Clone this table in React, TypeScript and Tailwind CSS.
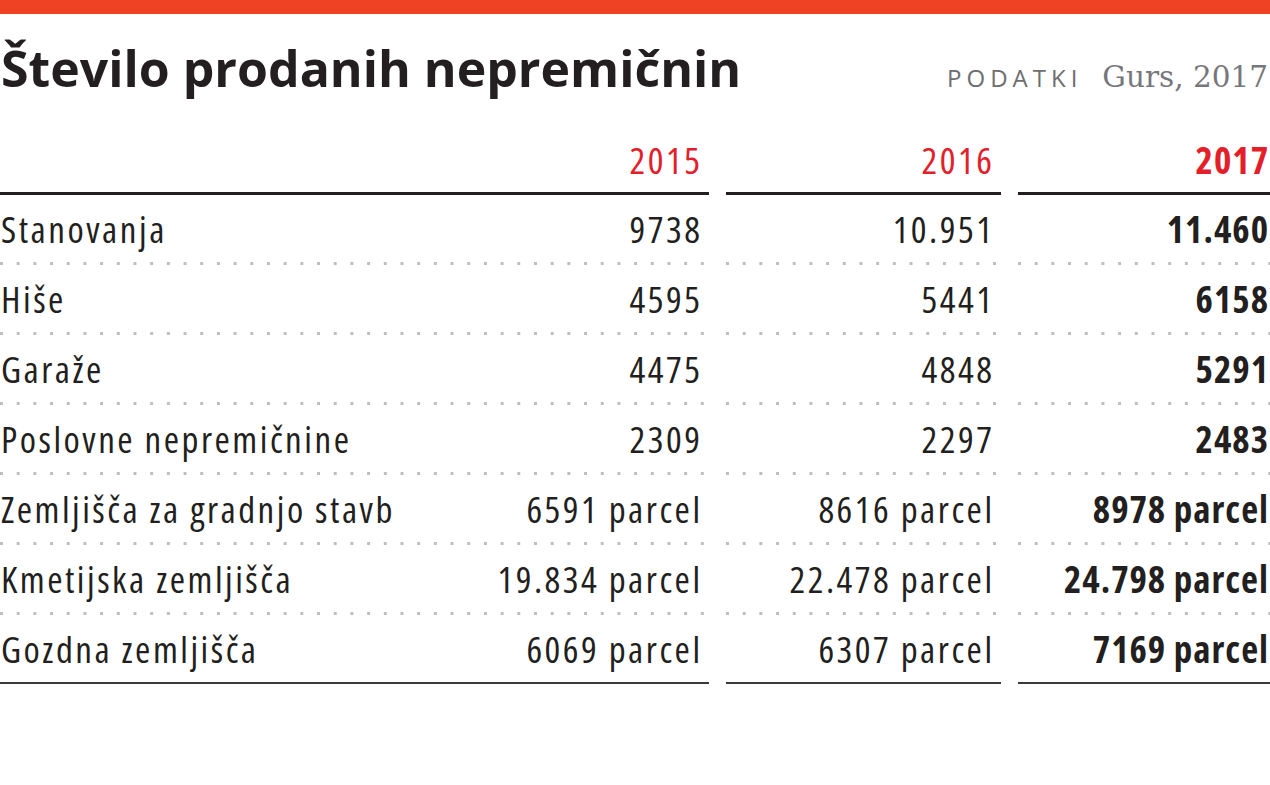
import React from "react";

const rows: [string, string, string, string][] = [
  ["Stanovanja", "9738", "10.951", "11.460"],
  ["Hiše", "4595", "5441", "6158"],
  ["Garaže", "4475", "4848", "5291"],
  ["Poslovne nepremičnine", "2309", "2297", "2483"],
  ["Zemljišča za gradnjo stavb", "6591 parcel", "8616 parcel", "8978 parcel"],
  ["Kmetijska zemljišča", "19.834 parcel", "22.478 parcel", "24.798 parcel"],
  ["Gozdna zemljišča", "6069 parcel", "6307 parcel", "7169 parcel"],
];

const Dots = () => (
  <div className="h-[3px] w-full bg-[linear-gradient(to_right,#bcbec0_3px,transparent_3px)] bg-[length:16.7px_3px] bg-repeat-x" />
);

const Rule = () => <div className="h-[2px] bg-[#3a3a3a]" />;

export default function App() {
  return (
    <div className="w-[1270px] h-[785px] bg-white text-[#231f20] font-['Open_Sans',sans-serif] overflow-hidden">
      <div className="h-[14px] bg-[#ef4123]" />
      <div className="flex items-baseline justify-between pr-[2px] pl-[1px] h-[92px] pt-[24px]">
        <h1 className="text-[50px] font-bold leading-[60px]">
          Število prodanih nepremičnin
        </h1>
        <div className="flex items-baseline gap-[20px]">
          <span className="text-[24px] tracking-[5px] text-[#6d6e70]">PODATKI</span>
          <span className="text-[29.5px] text-[#76777a] font-['DejaVu_Serif',serif]">Gurs, 2017</span>
        </div>
      </div>
      <div className="text-[37px] font-medium font-stretch-condensed tracking-[2.5px]">
        <div className="flex gap-[17px] h-[89px] items-end">
          <div className="w-[709px] pr-[6.5px] border-b-[3px] border-[#231f20] text-right text-[#e3202a] leading-[44px] pb-[10px]">
            2015
          </div>
          <div className="w-[275px] pr-[6.5px] border-b-[3px] border-[#231f20] text-right text-[#e3202a] leading-[44px] pb-[10px]">
            2016
          </div>
          <div className="flex-1 pr-[1px] border-b-[3px] border-[#231f20] text-right text-[#e3202a] leading-[44px] pb-[10px] font-bold tracking-[1px]">
            2017
          </div>
        </div>
        {rows.map((r, ri) => {
          const last = ri === rows.length - 1;
          return (
            <div key={r[0]} className="flex gap-[17px]">
              <div className="w-[709px] flex flex-col">
                <div className="h-[67px] flex items-center justify-between pr-[6.5px] pl-[1px]">
                  <span>{r[0]}</span>
                  <span>{r[1]}</span>
                </div>
                {last ? <Rule /> : <Dots />}
              </div>
              <div className="w-[275px] flex flex-col">
                <div className="h-[67px] flex items-center justify-end pr-[6.5px]">{r[2]}</div>
                {last ? <Rule /> : <Dots />}
              </div>
              <div className="flex-1 flex flex-col">
                <div className="h-[67px] flex items-center justify-end pr-[1px] font-bold tracking-[1px]">{r[3]}</div>
                {last ? <Rule /> : <Dots />}
              </div>
            </div>
          );
        })}
      </div>
    </div>
  );
}
